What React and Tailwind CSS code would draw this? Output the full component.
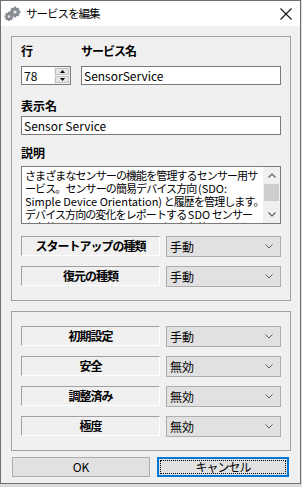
import React from 'react';

const font = { fontFamily: '"Noto Sans CJK JP", "Noto Sans", sans-serif' };

function Gears() {
  return (
    <svg width="17" height="15" viewBox="0 0 17 15" className="shrink-0">
      <g fill="#8a8f96" stroke="#6b7078" strokeWidth="0.6">
        <circle cx="11" cy="6" r="4.2" />
        <circle cx="5" cy="10.5" r="3.4" />
      </g>
      <g stroke="#8a8f96" strokeWidth="2">
        <path d="M11 0.5v2M11 9.5v2M5.5 6h2M14.5 6h2M7.2 2.2l1.4 1.4M13.4 8.4l1.4 1.4M14.8 2.2l-1.4 1.4M8.6 8.4l-1.4 1.4" />
        <path d="M5 5.8v1.5M5 13.7v1.3M0.5 10.5h1.3M8.2 10.5h1.3M1.8 7.3l1 1M7.2 12.7l1 1M8.2 7.3l-1 1M2.8 12.7l-1 1" />
      </g>
      <circle cx="11" cy="6" r="1.6" fill="#e8e8e8" />
      <circle cx="5" cy="10.5" r="1.2" fill="#e8e8e8" />
    </svg>
  );
}

function Chevron() {
  return (
    <svg width="8" height="5" viewBox="0 0 8 5" className="shrink-0">
      <path d="M0.5 0.5 L4 4 L7.5 0.5" fill="none" stroke="#606060" strokeWidth="1" />
    </svg>
  );
}

function SettingRow({ label, value }) {
  return (
    <div className="flex gap-[6px] h-[21px]">
      <div className="w-[139px] h-[20px] flex items-center justify-center border-t border-l border-[#a0a0a0] border-b border-r border-b-white border-r-white bg-[#f0f0f0] text-[12px] font-bold tracking-[-1px] text-black">
        {label}
      </div>
      <div className="w-[115px] h-[21px] flex items-center justify-between border border-[#adadad] bg-[#e1e1e1] pl-[3px] pr-[7px] text-[12px] text-black">
        <span>{value}</span>
        <Chevron />
      </div>
    </div>
  );
}

export default function App() {
  return (
    <div className="w-[302px] h-[487px] bg-[#dcdcdc] overflow-hidden" style={font}>
      <div className="w-[301px] h-[484px] border border-[#707070] bg-[#f0f0f0] flex flex-col">
        {/* title bar */}
        <div className="h-[25px] bg-white flex items-center pl-[3px] pr-[8px] shrink-0">
          <Gears />
          <span className="ml-[5px] text-[11.5px] tracking-[-1px] text-black">サービスを編集</span>
          <div className="flex-1" />
          <svg width="12" height="12" viewBox="0 0 12 12">
            <path d="M0.5 0.5 L11.5 11.5 M11.5 0.5 L0.5 11.5" stroke="#111" strokeWidth="1.1" />
          </svg>
        </div>

        {/* body */}
        <div className="pl-[10px] pt-[10px] flex flex-col">
          {/* group 1 */}
          <div className="w-[280px] h-[265px] border border-[#a0a0a0] pl-[9px] pt-[7px] flex flex-col">
            <div className="flex h-[14px] items-center text-[12px] font-bold text-black">
              <span className="w-[60px]">行</span>
              <span className="tracking-[-1px]">サービス名</span>
            </div>
            <div className="flex mt-[8px] h-[19px]">
              <div className="w-[50px] h-[19px] border border-[#7a7a7a] bg-white flex">
                <span className="flex-1 pl-[2px] text-[12px] leading-[17px] text-black">78</span>
                <div className="w-[16px] flex flex-col gap-[1px] p-[1px] bg-[#f0f0f0]">
                  <div className="flex-1 bg-[#e5e5e5] border border-[#c4c4c4] flex items-center justify-center">
                    <svg width="5" height="3" viewBox="0 0 5 3"><path d="M0 3 L2.5 0 L5 3Z" fill="#000" /></svg>
                  </div>
                  <div className="flex-1 bg-[#e5e5e5] border border-[#c4c4c4] flex items-center justify-center">
                    <svg width="5" height="3" viewBox="0 0 5 3"><path d="M0 0 L2.5 3 L5 0Z" fill="#000" /></svg>
                  </div>
                </div>
              </div>
              <div className="ml-[10px] w-[200px] h-[19px] border border-[#7a7a7a] bg-white pl-[2px] text-[12px] leading-[17px] text-black">
                SensorService
              </div>
            </div>

            <div className="mt-[14px] h-[14px] flex items-center text-[12px] font-bold text-black">表示名</div>
            <div className="mt-[3px] w-[260px] h-[19px] border border-[#7a7a7a] bg-white pl-[2px] text-[12px] leading-[17px] text-black">
              Sensor Service
            </div>

            <div className="mt-[11px] h-[14px] flex items-center text-[12px] font-bold text-black">説明</div>
            <div className="mt-[6px] w-[260px] h-[58px] border border-[#7a7a7a] bg-white flex overflow-hidden">
              <div className="flex-1 pl-[3px] pt-[2px] text-[11px] leading-[13px] tracking-[-0.9px] text-black overflow-hidden whitespace-nowrap">
                <div>さまざまなセンサーの機能を管理するセンサー用サ</div>
                <div>ービス。センサーの簡易デバイス方向 <span className="tracking-normal">(SDO:</span></div>
                <div><span className="tracking-normal">Simple Device Orientation)</span> と履歴を管理します。</div>
                <div>デバイス方向の変化をレポートする <span className="tracking-normal">SDO</span> センサー</div>
                <div>を有効にするには、このサービスを有効にします。</div>
              </div>
              <div className="w-[17px] bg-[#f0f0f0] flex flex-col items-center">
                <div className="h-[17px] flex items-center justify-center">
                  <svg width="8" height="5" viewBox="0 0 8 5"><path d="M0.5 4.5 L4 1 L7.5 4.5" fill="none" stroke="#606060" strokeWidth="1.2" /></svg>
                </div>
                <div className="w-[15px] h-[17px] bg-[#cdcdcd]" />
                <div className="flex-1" />
                <div className="h-[17px] flex items-center justify-center">
                  <svg width="8" height="5" viewBox="0 0 8 5"><path d="M0.5 0.5 L4 4 L7.5 0.5" fill="none" stroke="#606060" strokeWidth="1.2" /></svg>
                </div>
              </div>
            </div>

            <div className="mt-[12px] flex flex-col gap-[9px]">
              <SettingRow label="スタートアップの種類" value="手動" />
              <SettingRow label="復元の種類" value="手動" />
            </div>
          </div>

          {/* group 2 */}
          <div className="mt-[10px] w-[280px] h-[140px] border border-[#a0a0a0] pl-[9px] pt-[14px] flex flex-col gap-[9px]">
            <SettingRow label="初期設定" value="手動" />
            <SettingRow label="安全" value="無効" />
            <SettingRow label="調整済み" value="無効" />
            <SettingRow label="極度" value="無効" />
          </div>

          {/* buttons */}
          <div className="mt-[6px] flex">
            <div className="ml-[1px] w-[138px] h-[20px] border border-[#adadad] bg-[#e1e1e1] flex items-center justify-center text-[12px] text-black">
              OK
            </div>
            <div className="ml-[7px] w-[132px] h-[20px] border-2 border-[#0078d7] bg-[#e1e1e1] p-[1px]">
              <div className="w-full h-full border border-dotted border-black flex items-center justify-center text-[12px] tracking-[-1px] text-black">
                キャンセル
              </div>
            </div>
          </div>
        </div>
      </div>
    </div>
  );
}
